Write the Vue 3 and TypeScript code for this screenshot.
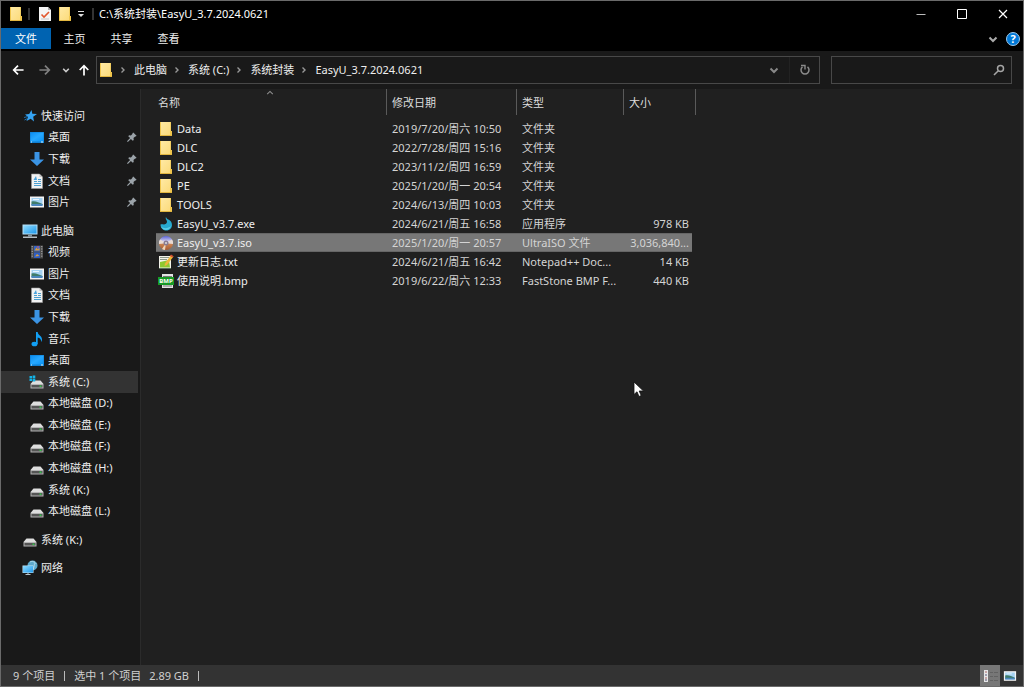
<script setup lang="ts">
import { ref } from 'vue'

interface NavItem {
  label: string
  icon: string
  pinned?: boolean
  root?: boolean
  current?: boolean
}

interface FileRow {
  name: string
  icon: string
  date: string
  type: string
  size: string
}

const tabs: string[] = ['文件', '主页', '共享', '查看']
const crumbs: string[] = ['此电脑', '系统 (C:)', '系统封装', 'EasyU_3.7.2024.0621']
const query = ref<string>('')
const selected = ref<string>('EasyU_v3.7.iso')

const groups: NavItem[][] = [
  [
    { label: '快速访问', icon: 'star', root: true },
    { label: '桌面', icon: 'desktop', pinned: true },
    { label: '下载', icon: 'download', pinned: true },
    { label: '文档', icon: 'document', pinned: true },
    { label: '图片', icon: 'picture', pinned: true },
  ],
  [
    { label: '此电脑', icon: 'computer', root: true },
    { label: '视频', icon: 'video' },
    { label: '图片', icon: 'picture' },
    { label: '文档', icon: 'document' },
    { label: '下载', icon: 'download' },
    { label: '音乐', icon: 'music' },
    { label: '桌面', icon: 'desktop' },
    { label: '系统 (C:)', icon: 'sysdrive', current: true },
    { label: '本地磁盘 (D:)', icon: 'drive' },
    { label: '本地磁盘 (E:)', icon: 'drive' },
    { label: '本地磁盘 (F:)', icon: 'drive' },
    { label: '本地磁盘 (H:)', icon: 'drive' },
    { label: '系统 (K:)', icon: 'drive' },
    { label: '本地磁盘 (L:)', icon: 'drive' },
  ],
  [{ label: '系统 (K:)', icon: 'drive', root: true }],
  [{ label: '网络', icon: 'network', root: true }],
]

const files: FileRow[] = [
  { name: 'Data', icon: 'folder', date: '2019/7/20/周六 10:50', type: '文件夹', size: '' },
  { name: 'DLC', icon: 'folder', date: '2022/7/28/周四 15:16', type: '文件夹', size: '' },
  { name: 'DLC2', icon: 'folder', date: '2023/11/2/周四 16:59', type: '文件夹', size: '' },
  { name: 'PE', icon: 'folder', date: '2025/1/20/周一 20:54', type: '文件夹', size: '' },
  { name: 'TOOLS', icon: 'folder', date: '2024/6/13/周四 10:03', type: '文件夹', size: '' },
  { name: 'EasyU_v3.7.exe', icon: 'exe', date: '2024/6/21/周五 16:58', type: '应用程序', size: '978 KB' },
  { name: 'EasyU_v3.7.iso', icon: 'iso', date: '2025/1/20/周一 20:57', type: 'UltraISO 文件', size: '3,036,840...' },
  { name: '更新日志.txt', icon: 'txt', date: '2024/6/21/周五 16:42', type: 'Notepad++ Doc...', size: '14 KB' },
  { name: '使用说明.bmp', icon: 'bmp', date: '2019/6/22/周六 12:33', type: 'FastStone BMP F...', size: '440 KB' },
]
</script>

<template>
  <div class="window">
    <svg class="defs" aria-hidden="true">
      <defs>
        <linearGradient id="g-folder" x1="0" y1="0" x2="1" y2="1">
          <stop offset="0" stop-color="#ffeaa6" /><stop offset="1" stop-color="#fbd976" />
        </linearGradient>
        <linearGradient id="g-blue" x1="0" y1="0" x2="1" y2="1">
          <stop offset="0" stop-color="#0a8cf0" /><stop offset="0.5" stop-color="#27a8ff" /><stop offset="1" stop-color="#0a93f5" />
        </linearGradient>
        <linearGradient id="g-screen" x1="0" y1="0" x2="1" y2="1">
          <stop offset="0" stop-color="#8fdcff" /><stop offset="1" stop-color="#1e96e8" />
        </linearGradient>
        <linearGradient id="g-disc" x1="0" y1="0" x2="0" y2="1">
          <stop offset="0" stop-color="#5a63d8" /><stop offset="0.4" stop-color="#d8d4ee" /><stop offset="0.6" stop-color="#c9814f" /><stop offset="1" stop-color="#a55a34" />
        </linearGradient>
      </defs>
      <symbol id="i-folder" viewBox="0 0 14 16">
        <path d="M1 1h11v9h1v5H1z" fill="url(#g-folder)" />
        <path d="M1 1h1v14H1z M11 10h2v5h-2z" fill="#f0c64d" />
        <path d="M11 1h1v9h-1z" fill="#f3cf62" />
        <path d="M1 14h12v1H1z" fill="#e3b740" />
      </symbol>
      <symbol id="i-star" viewBox="0 0 16 16">
        <path d="M9.500 2l.800 3.800 4.700.200-3.800 2.700.800 4.800-3.300-2.700L4.500 13l1.500-4L3 6.500l4.200-.500z" fill="#35a4f4" />
        <path d="M2 9.500l4-1M2.500 12l3-1.500" stroke="#1c6fae" />
      </symbol>
      <symbol id="i-desktop" viewBox="0 0 16 16">
        <path d="M1 3h14v11H1z" fill="#0f7fd2" /><path d="M1.500 3.500h13v9h-13z" fill="url(#g-blue)" />
        <path d="M2 13h1M12 13h2" stroke="#d5efff" />
      </symbol>
      <symbol id="i-download" viewBox="0 0 16 16">
        <path d="M5.500 1h5v7.500H15L8 15 1 8.500h4.500z" fill="#3b94e4" />
      </symbol>
      <symbol id="i-document" viewBox="0 0 16 16">
        <path d="M2.500 1h8L13.500 4v11.500h-11z" fill="#f2f2f2" stroke="#9a9a9a" stroke-width=".6" />
        <path d="M10.500 1v3h3" fill="#c4c4c4" />
        <path d="M5 8.500h3M9 6.500h3M9 8.500h3M5 10.500h7M5 12.500h7" stroke="#4b9fd0" />
        <path d="M4.500 7L7 3l1 4z" fill="#4aa3dd" />
      </symbol>
      <symbol id="i-picture" viewBox="0 0 16 16">
        <path d="M1 2.500h14v11H1z" fill="#f4f4f4" />
        <path d="M2.500 4h11v8h-11z" fill="#a4d2f2" />
        <path d="M2.500 7.500c4-1 7 1 11 2.500v1h-11z" fill="#3f7c6a" />
        <path d="M2.500 10c4 0 7 0 11 0v2h-11z" fill="#4a86bd" />
        <path d="M4 5.500h6" stroke="#e8f6ff" />
      </symbol>
      <symbol id="i-computer" viewBox="0 0 16 16">
        <path d="M.500 1.500h15v10H.500z" fill="#b7dff5" /><path d="M1.500 2.500h13v8h-13z" fill="url(#g-screen)" />
        <path d="M6 11.500h4v2H6z" fill="#83939d" /><path d="M1 13.500h14v1.500H1z" fill="#b3bdc3" />
      </symbol>
      <symbol id="i-video" viewBox="0 0 16 16">
        <path d="M2 1.500h12v13H2z" fill="#4b4b4b" />
        <path d="M3.200 2v12M12.800 2v12" stroke="#b6b6b6" stroke-dasharray="1.200 1.200" />
        <path d="M5 2h6v5.500H5z" fill="#3766c4" /><path d="M5 8.500h6V14H5z" fill="#2e5ec3" />
        <path d="M5.500 6.500l2-3 1 1.500L10.500 4v2.500z M6 12.500l2-2.500 2.500 2z" fill="#d79b42" />
        <path d="M8 3h2" stroke="#e2556b" />
      </symbol>
      <symbol id="i-music" viewBox="0 0 16 16">
        <ellipse cx="5.500" cy="13" rx="3" ry="2.300" fill="#12a0f5" />
        <path d="M7 1h1.700c0 3 4.300 3.500 4.300 7.500 0 1-.500 2-1 2.500.400-3-1.500-4-3.300-4.500V13H7z" fill="#12a0f5" />
      </symbol>
      <symbol id="i-drive" viewBox="0 0 16 16">
        <path d="M4.500 6.500h7l3 3.500h-13z" fill="#dedede" /><path d="M1.500 10h13v4.500h-13z" fill="#b4b4b4" />
        <path d="M2.500 11h11v2.500h-11z" fill="#555" /><path d="M10.500 11.500h2V13h-2z" fill="#35c24a" />
      </symbol>
      <symbol id="i-sysdrive" viewBox="0 0 16 16">
        <path d="M4.500 6.500h7l3 3.500h-13z" fill="#dedede" /><path d="M1.500 10h13v4.500h-13z" fill="#b4b4b4" />
        <path d="M2.500 11h11v2.500h-11z" fill="#555" /><path d="M10.500 11.500h2V13h-2z" fill="#35c24a" />
        <path d="M.500 2H3v2.200H.500z M3.600 1.500h2.700v2.700H3.600z M.500 4.800H3V7H.500z M3.600 4.800h2.700v2.700H3.600z" fill="#13b5ea" />
      </symbol>
      <symbol id="i-network" viewBox="0 0 16 16">
        <circle cx="10.500" cy="5.500" r="5" fill="#5da9cb" /><path d="M8 2c3-1.500 5 0 6 2M12 1.500c1 3 0 6-1 8" stroke="#a5d4e6" fill="none" />
        <path d="M.500 5.500h11v7.500H.500z" fill="#c1e6fa" /><path d="M1 6h10v6.500H1z" fill="url(#g-screen)" />
        <path d="M3.500 14.500h5M6 13v1.500" stroke="#b6c4cc" />
      </symbol>
      <symbol id="i-exe" viewBox="0 0 16 16">
        <path d="M8 1c-1 2 1 3 1 4.800S7.200 8.500 6 8.500C5 8.500 4 8 2.500 8.500 2.500 12 5 14.500 8.300 14.500c3.700 0 5.700-2.700 5.700-5.500 0-3-1.700-4.500-3.200-5.200C9.500 3.200 8.500 2.500 8 1z" fill="#27a9cf" />
        <path d="M3 10.500c3 2.500 7 2 10-.500-1 3-3 4-5 4s-4-1-5-3.500z" fill="#56cde8" />
      </symbol>
      <symbol id="i-iso" viewBox="0 0 16 16">
        <circle cx="8" cy="8" r="7" fill="url(#g-disc)" />
        <path d="M8 8L2 4.500A7 7 0 0 0 1 9z M8 8l6-3.500A7 7 0 0 1 15 9z" fill="#eadbd2" />
        <path d="M8 8L4 14a7 7 0 0 0 3 1z" fill="#f0d3b8" />
        <circle cx="8" cy="8" r="2.500" fill="#8a7b91" /><circle cx="8" cy="8" r="1" fill="#ddd" />
      </symbol>
      <symbol id="i-txt" viewBox="0 0 16 16">
        <path d="M1 2h12v12.500H1z" fill="#f3f3ea" /><path d="M2 8l9-2 1 7.500H2z" fill="#8fc931" />
        <path d="M2 3.500h9M2 5.500h7" stroke="#8d9a8a" /><path d="M1 14.500h12" stroke="#58705a" />
        <path d="M13 1l2.500 1.500L9 11l-2.500 1 .500-2.500z" fill="#f0b63a" /><path d="M13 .500l2.500 1.700-1 1.300L12 2z" fill="#d64d35" />
      </symbol>
      <symbol id="i-bmp" viewBox="0 0 16 16">
        <path d="M4 1h11v14H4z" fill="#e4e4e4" /><path d="M5 3.500h9M5 13h9" stroke="#777" />
        <path d="M0 4h16v8H0z" fill="#189a25" />
      </symbol>
      <symbol id="i-props" viewBox="0 0 14 16">
        <path d="M1 1h9l3 3v11H1z" fill="#f4f4f4" /><path d="M10 1v3h3" fill="#aaa" />
        <path d="M3.500 8.500L6 11l5-5" stroke="#e2562c" stroke-width="1.600" fill="none" />
        <path d="M3 13h8" stroke="#c6c6c6" />
      </symbol>
      <symbol id="i-pin" viewBox="0 0 12 12">
        <path d="M7.500.500l4 4-1 1-.700-.200-2 2 .300 2.200-1.200 1-2.200-2.200L1 12l-1-1 3.700-3.700-2.200-2.200 1-1.200 2.200.300 2-2L6.500 1.500z" fill="#9ba3a9" />
      </symbol>
      <symbol id="i-chev" viewBox="0 0 10 10">
        <path d="M1.500 3.500L5 7l3.500-3.500" fill="none" stroke="currentColor" stroke-width="2" />
      </symbol>
      <symbol id="i-crumb" viewBox="0 0 10 10">
        <path d="M3.500 2.500L6 5 3.500 7.500" fill="none" stroke="currentColor" stroke-width="1.400" />
      </symbol>
      <symbol id="i-arrow" viewBox="0 0 14 14">
        <path d="M13.500 7H2M7 2L2 7l5 5" fill="none" stroke="currentColor" stroke-width="2" />
      </symbol>
    </svg>

    <header class="titlebar">
      <svg class="ic tall"><use href="#i-folder" /></svg>
      <span class="bar"></span>
      <button class="quick" type="button" aria-label="属性"><svg class="ic tall"><use href="#i-props" /></svg></button>
      <button class="quick" type="button" aria-label="新建文件夹"><svg class="ic tall"><use href="#i-folder" /></svg></button>
      <button class="more" type="button" aria-label="自定义快速访问工具栏">
        <svg width="8" height="8" viewBox="0 0 8 8"><path d="M1 1.500h6" stroke="#ddd" /><path d="M1 4h6L4 7z" fill="#ddd" /></svg>
      </button>
      <span class="bar"></span>
      <h1>C:\系统封装\EasyU_3.7.2024.0621</h1>
      <div class="controls">
        <button type="button" aria-label="最小化"><svg width="10" height="10" viewBox="0 0 10 10"><path d="M.5 5.500h9" stroke="#bbb" /></svg></button>
        <button type="button" aria-label="最大化"><svg width="10" height="10" viewBox="0 0 10 10"><path d="M.5.500h9v9h-9z" fill="none" stroke="#fff" /></svg></button>
        <button type="button" aria-label="关闭"><svg width="10" height="10" viewBox="0 0 10 10"><path d="M1 1l8 8M9 1L1 9" stroke="#fff" stroke-width="1.200" /></svg></button>
      </div>
    </header>

    <nav class="tabs" aria-label="功能区">
      <button v-for="(tab, i) in tabs" :key="tab" type="button" :class="{ primary: i === 0 }">{{ tab }}</button>
      <button class="expand" type="button" aria-label="展开功能区"><svg class="chev"><use href="#i-chev" /></svg></button>
      <button class="help" type="button" aria-label="帮助">?</button>
    </nav>

    <div class="toolbar">
      <button class="go" type="button" aria-label="后退"><svg class="arrow"><use href="#i-arrow" /></svg></button>
      <button class="go dim" type="button" aria-label="前进"><svg class="arrow flip"><use href="#i-arrow" /></svg></button>
      <button class="go slim" type="button" aria-label="最近位置"><svg class="mini"><use href="#i-chev" /></svg></button>
      <button class="go up" type="button" aria-label="上移"><svg class="arrow turn"><use href="#i-arrow" /></svg></button>
      <div class="address">
        <svg class="ic tall"><use href="#i-folder" /></svg>
        <template v-for="crumb in crumbs" :key="crumb">
          <svg class="sep"><use href="#i-crumb" /></svg>
          <button class="crumb" type="button">{{ crumb }}</button>
        </template>
        <button class="drop" type="button" aria-label="以前的位置"><svg class="chev"><use href="#i-chev" /></svg></button>
        <button class="refresh" type="button" aria-label="刷新">
          <svg width="12" height="12" viewBox="0 0 12 12"><path d="M8.500 2.800a4 4 0 1 1-5 0" fill="none" stroke="#8b8b8b" stroke-width="1.500" /><path d="M2 1.500h4v4" fill="none" stroke="#8b8b8b" stroke-width="1.400" /></svg>
        </button>
      </div>
      <label class="search">
        <input v-model="query" type="text" aria-label="搜索" />
        <svg width="12" height="12" viewBox="0 0 12 12"><circle cx="7.500" cy="4.500" r="3" fill="none" stroke="#a5a5a5" stroke-width="1.500" /><path d="M5.300 6.700L1 11" stroke="#a5a5a5" stroke-width="1.600" /></svg>
      </label>
    </div>

    <div class="body">
      <aside class="sidebar">
        <ul v-for="(group, g) in groups" :key="g" :class="{ quickaccess: g === 0, thispc: g === 1 }">
          <li v-for="item in group" :key="item.label" :class="{ root: item.root, current: item.current }">
            <a href="#"><svg class="ic"><use :href="'#i-' + item.icon" /></svg><span>{{ item.label }}</span></a>
            <svg v-if="item.pinned" class="pin"><use href="#i-pin" /></svg>
          </li>
        </ul>
      </aside>

      <main class="content">
        <table>
          <colgroup><col class="c-name" /><col class="c-date" /><col class="c-type" /><col class="c-size" /></colgroup>
          <thead>
            <tr>
              <th scope="col" class="sorted">名称<svg class="sort" viewBox="0 0 10 10"><path d="M1.500 6.500L5 3l3.500 3.500" fill="none" stroke="#909090" stroke-width="1.300" /></svg></th>
              <th scope="col">修改日期</th>
              <th scope="col">类型</th>
              <th scope="col">大小</th>
            </tr>
          </thead>
          <tbody>
            <tr v-for="file in files" :key="file.name" :class="{ selected: file.name === selected }" @click="selected = file.name">
              <td>
                <div class="name">
                  <svg class="ic"><use :href="'#i-' + file.icon" /></svg><span>{{ file.name }}</span>
                  <b v-if="file.icon === 'bmp'" class="badge">BMP</b>
                </div>
              </td>
              <td>{{ file.date }}</td>
              <td>{{ file.type }}</td>
              <td class="size">{{ file.size }}</td>
            </tr>
          </tbody>
        </table>
      </main>
    </div>

    <footer class="status">
      <span>9 个项目</span><i></i><span>选中 1 个项目</span><span class="total">2.89 GB</span><i></i>
      <div class="views">
        <button class="on" type="button" aria-label="详细信息">
          <svg width="16" height="14" viewBox="0 0 16 14"><path d="M2 1h4v12H2z" fill="#e6e6e6" /><path d="M3 3h2M3 9h2" stroke="#a66" /><path d="M3 6h2M3 11h2" stroke="#557" /><path d="M8 3.500h3M12 3.500h4M8 7.500h3M12 7.500h4M8 11.500h3M12 11.500h4" stroke="#626262" /></svg>
        </button>
        <button type="button" aria-label="大图标"><svg width="14" height="14"><use href="#i-picture" /></svg></button>
      </div>
    </footer>

    <svg class="cursor" width="12" height="18" viewBox="0 0 12 18"><path d="M1 1v12.500l3-2.700 2 4.700 2.200-1-2-4.500h4.300z" fill="#fff" stroke="#111" stroke-width=".8" /></svg>
  </div>
</template>

<style>
body {
  background: #191919;
}
</style>

<style scoped>
.window {
  position: relative;
  box-sizing: border-box;
  display: flex;
  flex-direction: column;
  min-height: 100vh;
  border: 1px solid #6a6a6a;
  background: #191919;
  color: #eee;
  font-family: "Noto Sans", "Noto Sans CJK SC", sans-serif;
  font-size: 11px;
  line-height: 16px;
}
.defs {
  position: absolute;
  width: 0;
  height: 0;
}
button {
  display: flex;
  align-items: center;
  justify-content: center;
  padding: 0;
  border: 0;
  background: none;
  color: inherit;
  font: inherit;
}
a {
  color: inherit;
  text-decoration: none;
}
.ic {
  flex: none;
  width: 16px;
  height: 16px;
}
.ic.tall {
  width: 14px;
}
.titlebar {
  box-sizing: border-box;
  display: flex;
  align-items: center;
  height: 27px;
  padding: 0 0 2px 8px;
  background: #000;
}
.bar {
  width: 2px;
  height: 12px;
  margin: 0 5px;
  background: #333;
}
.quick {
  width: 20px;
}
.more {
  width: 12px;
}
h1 {
  margin: 0;
  font-size: 11px;
  font-weight: 400;
  color: #fff;
}
.controls {
  display: flex;
  margin-left: auto;
}
.controls button {
  width: 41px;
  height: 25px;
}
.tabs {
  display: flex;
  height: 23px;
  background: #000;
}
.tabs button {
  width: 47px;
  height: 21px;
}
.tabs .primary {
  width: 50px;
  background: #0063b1;
  color: #fff;
}
.tabs .expand {
  width: 20px;
  margin-left: auto;
  color: #aaa;
}
.tabs .help {
  box-sizing: border-box;
  width: 14px;
  height: 14px;
  margin: 4px 3px;
  border: 1px solid #9cc8ec;
  border-radius: 50%;
  background: #0078d7;
  color: #fff;
  font-weight: 700;
}
.chev {
  width: 10px;
  height: 10px;
}
.mini {
  width: 8px;
  height: 8px;
}
.toolbar {
  display: flex;
  align-items: center;
  height: 38px;
  padding: 0 11px 0 3px;
}
.go {
  width: 28px;
  height: 28px;
  color: #fff;
}
.go.dim {
  width: 26px;
  color: #808080;
}
.go.slim {
  width: 16px;
  color: #ccc;
}
.go.up {
  width: 20px;
}
.arrow {
  width: 12px;
  height: 12px;
}
.arrow.flip {
  transform: rotate(180deg);
}
.arrow.turn {
  transform: rotate(90deg);
}
.address,
.search {
  box-sizing: border-box;
  display: flex;
  align-items: center;
  height: 28px;
  border: 1px solid #484848;
}
.address {
  flex: 1;
  margin: 0 11px 0 2px;
  padding-left: 2px;
}
.search {
  width: 181px;
  padding-right: 6px;
}
.search input {
  flex: 1;
  min-width: 0;
  border: 0;
  outline: 0;
  background: none;
  color: inherit;
  font: inherit;
}
.sep {
  width: 10px;
  height: 10px;
  margin: 0 6px 0 5px;
  color: #999;
}
.drop {
  width: 30px;
  height: 26px;
  margin-left: auto;
  color: #888;
}
.refresh {
  width: 30px;
  height: 26px;
  border-left: 1px solid #222;
}
.body {
  display: flex;
  flex: 1;
}
.sidebar {
  box-sizing: border-box;
  display: flex;
  flex-direction: column;
  gap: 7px;
  width: 140px;
  padding: 16px 2px 0 0;
  border-right: 1px solid #2b2b2b;
}
.sidebar ul {
  display: grid;
  grid-auto-rows: 1fr;
  margin: 0;
  padding: 0;
  list-style: none;
}
.quickaccess {
  min-height: 108px;
}
.thispc {
  min-height: 302px;
}
.sidebar li {
  display: flex;
  align-items: center;
  justify-content: space-between;
  min-height: 21px;
  padding: 0 1px 0 28px;
}
.sidebar .root {
  padding-left: 21px;
}
.sidebar .current {
  background: #333;
}
.sidebar a {
  display: flex;
  align-items: center;
  gap: 3px;
}
.pin {
  width: 10px;
  height: 10px;
}
.content {
  flex: 1;
  padding-left: 15px;
  background: #202020;
}
table {
  table-layout: fixed;
  width: 540px;
  border-collapse: separate;
  border-spacing: 0;
}
.c-name {
  width: 231px;
}
.c-date {
  width: 130px;
}
.c-type {
  width: 107px;
}
.c-size {
  width: 72px;
}
th {
  box-sizing: border-box;
  height: 26px;
  padding: 2px 5px 0;
  border-right: 1px solid #5a5a5a;
  color: #ddd;
  font-weight: 400;
  text-align: left;
}
.sorted {
  position: relative;
  padding-left: 2px;
}
.sort {
  position: absolute;
  top: 0;
  left: calc(50% - 5px);
  width: 8px;
  height: 8px;
}
tbody::before {
  content: "";
  display: block;
  height: 4px;
}
td {
  box-sizing: border-box;
  height: 19px;
  padding: 0 5px;
  overflow: hidden;
  color: #d4d4d4;
  white-space: nowrap;
}
td:first-child {
  padding-left: 2px;
  color: #eee;
}
.name {
  position: relative;
  display: flex;
  align-items: center;
  gap: 3px;
}
.badge {
  position: absolute;
  top: 4px;
  left: 0;
  width: 16px;
  color: #fff;
  font-size: 6px;
  line-height: 8px;
  text-align: center;
}
.size {
  padding: 0 3px 0 0;
  border-right: 4px solid transparent;
  background-clip: padding-box;
  text-align: right;
}
.selected td {
  background-color: #777;
  box-shadow: inset 0 1px #666, inset 0 -1px #666;
}
.status {
  display: flex;
  align-items: center;
  height: 21px;
  padding-left: 12px;
  background: #333;
  color: #d0d0d0;
}
.status i {
  width: 1px;
  height: 10px;
  margin: 0 9px;
  background: #bbb;
}
.status .total {
  margin-left: 8px;
}
.views {
  display: flex;
  margin-left: auto;
  padding-right: 3px;
}
.views button {
  width: 20px;
  height: 21px;
}
.views .on {
  background: #777;
}
.cursor {
  position: absolute;
  top: 380px;
  left: 632px;
  pointer-events: none;
}
</style>
